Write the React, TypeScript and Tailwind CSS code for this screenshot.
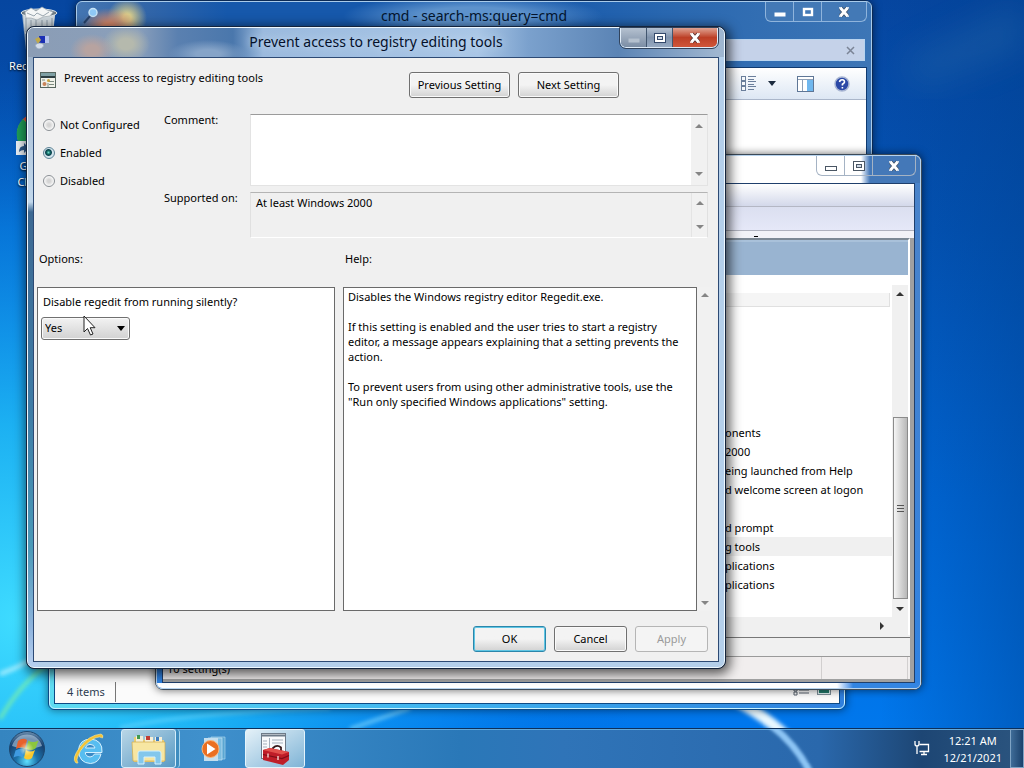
import React from "react";

const FONT = "font-['Noto_Sans','Open_Sans',sans-serif]";

function Wallpaper() {
  return (
    <svg className="absolute inset-0 h-full w-full" viewBox="0 0 1024 768" preserveAspectRatio="none" aria-hidden="true">
      <defs>
        <linearGradient id="sky" x1="0" y1="0" x2="0" y2="1">
          <stop offset="0" stopColor="#0646a0" />
          <stop offset="0.3" stopColor="#0353b4" />
          <stop offset="0.65" stopColor="#0068d8" />
          <stop offset="1" stopColor="#007af0" />
        </linearGradient>
        <radialGradient id="cyan" gradientUnits="userSpaceOnUse" cx="0" cy="0" r="1" gradientTransform="translate(20 620) scale(620 560)">
          <stop offset="0" stopColor="#3fdcff" />
          <stop offset="0.35" stopColor="#1fb9f6" stopOpacity="0.9" />
          <stop offset="0.7" stopColor="#0a8cf0" stopOpacity="0.6" />
          <stop offset="1" stopColor="#0068d8" stopOpacity="0" />
        </radialGradient>
        <linearGradient id="edge" x1="0" y1="0" x2="1" y2="0">
          <stop offset="0.86" stopColor="#003f90" stopOpacity="0" />
          <stop offset="1" stopColor="#00408f" stopOpacity="0.45" />
        </linearGradient>
        <filter id="soft"><feGaussianBlur stdDeviation="2" /></filter>
        <filter id="wide"><feGaussianBlur stdDeviation="16" /></filter>
      </defs>
      <rect width="1024" height="768" fill="url(#sky)" />
      <rect width="1024" height="768" fill="url(#cyan)" />
      <rect width="1024" height="768" fill="url(#edge)" />
      <path d="M900 60 L1024 0 V50 L920 90Z" fill="#2a6aa8" opacity="0.35" filter="url(#wide)" />
      <path d="M0 674 Q30 664 60 640" fill="none" stroke="#d8fbff" strokeWidth="4" opacity="0.7" filter="url(#soft)" />
      <path d="M0 719 Q20 684 48 664" fill="none" stroke="#7df0a8" strokeWidth="3" filter="url(#soft)" />
      <path d="M120 728 Q190 712 330 708" fill="none" stroke="#7fe0ff" strokeWidth="3" opacity="0.6" filter="url(#soft)" />
      <path d="M350 729 L410 708" fill="none" stroke="#9fe8ff" strokeWidth="3" opacity="0.7" filter="url(#soft)" />
      <path d="M735 700 Q785 726 818 772" fill="none" stroke="#e8f8ff" strokeWidth="11" filter="url(#soft)" />
    </svg>
  );
}

function RecycleBin() {
  return (
    <svg width="48" height="48" viewBox="0 0 48 48" aria-hidden="true">
      <path d="M8 10 L12 46 H36 L41 10Z" fill="#a9bccd" opacity="0.85" />
      <path d="M9 11 L41 11 L39 30 H11Z" fill="#cfd8de" />
      <path d="M12 14 V28 M17 16 V28 M22 16 V28 M28 16 V28 M33 16 V28 M38 14 V28" stroke="#8d9ca8" strokeWidth="1" />
      <ellipse cx="25" cy="9" rx="18" ry="4" fill="#6d7b85" stroke="#dfe8ee" />
      <path d="M11 8 l6 -4 5 3 6 -4 5 3 6 2 -3 4 -7 1 -6 3 -6 -2 -5 0Z" fill="#f4f6f6" stroke="#a3adb3" strokeWidth="0.7" />
      <path d="M13 9 l7 3 3 -3 6 3 6 -4" fill="none" stroke="#9aa7b0" />
    </svg>
  );
}

function Chrome() {
  return (
    <svg width="48" height="48" viewBox="0 0 48 48" aria-hidden="true">
      <circle cx="24" cy="24" r="21" fill="#f4c32c" />
      <path d="M24 24 L9 9 A21 21 0 0 1 42 13Z" fill="#dd4b3a" />
      <path d="M9 9 A21 21 0 0 0 24 45 L30 30Z" fill="#1f9d57" />
      <circle cx="24" cy="24" r="9" fill="#3f7fe8" stroke="#fff" strokeWidth="2" />
      <rect x="2" y="31" width="14" height="14" fill="#e8eef4" />
      <path d="M5 42 q0 -6 5 -6 v-3 l5 5 -5 5 v-3 q-3 0 -5 2Z" fill="#2c5a8c" />
    </svg>
  );
}

function DesktopIcons() {
  return (
    <div className="absolute left-0 top-0 flex w-[76px] flex-col gap-9 pt-1 text-center text-[11px] leading-4 text-white [text-shadow:0_1px_2px_#000]">
      <a href="#bin" className="flex flex-col items-center">
        <RecycleBin />
        <span className="whitespace-nowrap pt-1.5">Recycle Bin</span>
      </a>
      <a href="#chrome" className="flex flex-col items-center">
        <Chrome />
        <span>Google<br />Chrome</span>
      </a>
    </div>
  );
}

function Arrow({ dir, dark = false }: { dir: "up" | "down" | "right"; dark?: boolean }) {
  const d = dir === "up" ? "M0 5 L4 1 L8 5Z" : dir === "down" ? "M0 1 L8 1 L4 5Z" : "M2 -1 L6 3 L2 7Z";
  return (
    <svg width="8" height="6" viewBox="0 0 8 6" className="overflow-visible" aria-hidden="true">
      <path d={d} fill={dark ? "#333" : "#858585"} />
    </svg>
  );
}

function ScrollBar({ className = "" }: { className?: string }) {
  return (
    <div className={`flex w-4 shrink-0 flex-col items-center justify-between bg-[#f1f1f1] ${className}`}>
      <Arrow dir="up" />
      <Arrow dir="down" />
    </div>
  );
}

function MinGlyph({ line = "none", fill = "#fff" }: { line?: string; fill?: string }) {
  return (
    <svg width="14" height="12" viewBox="0 0 14 12" aria-hidden="true">
      <rect x="1.5" y="6.5" width="11" height="4" fill={fill} stroke={line} />
    </svg>
  );
}

function MaxGlyph({ restore = false, line = "#34496b" }: { restore?: boolean; line?: string }) {
  return (
    <svg width="14" height="12" viewBox="0 0 14 12" aria-hidden="true">
      {restore ? (
        <>
          <rect x="1.5" y="1.5" width="11" height="9" fill="#fff" stroke={line} />
          <rect x="4.5" y="4.5" width="5" height="3" fill="#cfd9e6" stroke={line} />
        </>
      ) : (
        <rect x="3" y="3" width="8" height="6" fill="none" stroke="#fff" strokeWidth="2.4" />
      )}
    </svg>
  );
}

function CloseGlyph({ line = "#44546a" }: { line?: string }) {
  return (
    <svg width="14" height="12" viewBox="0 0 14 12" aria-hidden="true">
      <path d="M3.5 2 L10.500 10 M10.500 2 L3.500 10" stroke={line} strokeWidth="4.400" />
      <path d="M3.5 2 L10.500 10 M10.500 2 L3.500 10" stroke="#fff" strokeWidth="2.800" />
      <path d="M2 1.800 h3 M9 1.800 h3 M2 10.200 h3 M9 10.200 h3" stroke="#fff" strokeWidth="1.200" />
    </svg>
  );
}

function SearchWindow() {
  return (
    <section className="absolute left-[75px] top-0 flex h-[560px] w-[798px] flex-col rounded-t-lg border border-[#0b2a55] shadow-[0_0_8px_rgba(0,0,0,0.5)]">
      <div className="flex grow flex-col rounded-t-md border border-[#a9cbea] bg-[radial-gradient(ellipse_28px_18px_at_32px_24px,#d2876b_20%,transparent),radial-gradient(ellipse_20px_20px_at_50px_16px,#d8cd8c_20%,transparent),radial-gradient(ellipse_130px_22px_at_396px_14px,#5d92cc_40%,transparent),linear-gradient(to_right,#4476b2_0,#3567a8_60px,#1658ab_150px,#1658ab_450px,#2a68b0_600px,#3d76b6_100%)] px-1">
        <header className="grid h-[37px] grid-cols-[1fr_auto_1fr] items-start">
          <svg width="18" height="18" viewBox="0 0 18 18" className="mt-1 ml-0.5" aria-hidden="true">
            <path d="M1 17 L7 10" stroke="#27436b" strokeWidth="2" />
            <circle cx="10" cy="6.500" r="4" fill="#8fc8f6" stroke="#c5e2f6" strokeWidth="1.5" />
          </svg>
          <h2 className="pt-1 text-[14px] leading-5 text-[#04152e]">cmd - search-ms:query=cmd</h2>
          <div className="flex h-5 justify-self-end rounded-b-md border border-t-0 border-[#8fb4dc] bg-[#4379b6]">
            <button aria-label="Minimize search" className="grid w-7 place-items-center border-r border-[#8fb4dc]"><MinGlyph /></button>
            <button aria-label="Maximize search" className="grid w-7 place-items-center border-r border-[#8fb4dc]"><MaxGlyph /></button>
            <button aria-label="Close search" className="grid w-11 place-items-center"><CloseGlyph /></button>
          </div>
        </header>
        <div className="mr-0.5 flex h-[22px] items-center justify-end border border-[#b9d4ef] bg-[#c5d2e9] pr-2">
          <button aria-label="Clear search" className="grid size-3 place-items-center">
            <svg width="9" height="9" viewBox="0 0 9 9"><path d="M1 1 L8 8 M8 1 L1 8" stroke="#7b8496" strokeWidth="1.5" /></svg>
          </button>
        </div>
        <div className="mt-1.5 flex grow flex-col border border-[#0f3a70] bg-white">
          <div className="flex h-8 items-center justify-end border-b border-[#aab6ca] bg-linear-to-b from-white to-[#dde7f4] pr-4">
            <button aria-label="Change view" className="flex items-center gap-3">
              <svg width="15" height="17" viewBox="0 0 15 17" aria-hidden="true">
                {[1, 6, 11].map((y) => (
                  <g key={y} stroke="#6b7f9c">
                    <rect x="0.5" y={y + 0.5} width="4" height="4" fill="#f6f9fc" />
                    <path d={`M7 ${y + 0.5} H15 M7 ${y + 3.5} H13`} />
                  </g>
                ))}
              </svg>
              <svg width="8" height="5" viewBox="0 0 8 5" aria-hidden="true"><path d="M0 0 H8 L4 5Z" fill="#1c2b3e" /></svg>
            </button>
            <button aria-label="Preview pane" className="ml-[21px]">
              <svg width="17" height="16" viewBox="0 0 17 16" aria-hidden="true">
                <rect x="0.5" y="0.5" width="16" height="15" fill="#fff" stroke="#5e7696" />
                <path d="M1 3.5 H16 M5.5 3 V15" stroke="#8fa0b6" />
                <rect x="10" y="4" width="6" height="11" fill="#6fb7ee" />
              </svg>
            </button>
            <button aria-label="Help" className="ml-5">
              <svg width="16" height="16" viewBox="0 0 16 16" aria-hidden="true">
                <circle cx="8" cy="8" r="7" fill="#2b48a6" stroke="#a9b6d3" strokeWidth="1.5" />
                <path d="M5.5 6 Q6 3.7 8.2 3.8 Q10.8 4 10.4 6.3 Q9.8 7.4 8.4 8.2 V9.5 M8.4 11 V12.5" fill="none" stroke="#fff" strokeWidth="1.6" />
              </svg>
            </button>
          </div>
        </div>
      </div>
    </section>
  );
}

function ItemsWindow() {
  return (
    <section className="absolute left-[48px] top-[400px] flex h-[310px] w-[798px] flex-col rounded-md border border-[#0d4a86] shadow-[0_0_8px_rgba(0,0,0,0.5)]">
      <div className="flex grow flex-col rounded-md border border-[#c8f2ff] bg-linear-to-r from-[#5fdcf2] via-[#3fb2ee] to-[#2f7fdd] px-1 pb-1">
        <div className="flex grow flex-col justify-end border border-[#0d4a86] bg-[#fbfbfb]">
          <footer className="flex h-[22px] items-center justify-between px-3 text-[11px] text-[#2d3c50]">
            <span className="flex h-5 items-center border-r border-[#777] pr-2.5">4 items</span>
            <svg width="40" height="10" viewBox="0 0 40 10" className="-mr-1.5" aria-hidden="true">
              <path d="M1 1 h3 v3 h-3z M1 5 h3 v3 h-3z M6 3 h10 M6 6 h10" fill="none" stroke="#56606c" />
              <rect x="24.500" y="0.5" width="13" height="7" fill="#dff0f0" stroke="#7d8f98" />
              <rect x="26" y="2" width="10" height="4" fill="#237a6b" />
            </svg>
          </footer>
        </div>
      </div>
    </section>
  );
}

const settings = [
  { name: "onents" },
  { name: "2000" },
  { name: "eing launched from Help" },
  { name: "d welcome screen at logon" },
  { name: "" },
  { name: "d prompt" },
  { name: "g tools", selected: true },
  { name: "plications" },
  { name: "plications" },
];

function PolicyWindow() {
  return (
    <section className="absolute left-[155px] top-[154px] flex h-[536px] w-[767px] flex-col rounded-lg border border-[#3c4a58] bg-white shadow-[0_0_9px_rgba(0,0,0,0.6)]">
      <div className="flex grow flex-col rounded-md border border-[#b7d3ee] bg-linear-to-b from-[#4b83c8] to-[#2f82e2]">
        <header className="flex h-[27px] items-start justify-end rounded-t-md bg-linear-to-r from-white from-[704px] to-[#4478b8] to-[713px] pr-1">
          <div className="flex h-5 rounded-b-md border border-t-0 border-[#a5b3c4]">
            <button aria-label="Minimize policy editor" className="grid w-7 place-items-center border-r border-[#a5b3c4]"><MinGlyph line="#4a5664" /></button>
            <button aria-label="Maximize policy editor" className="grid w-7 place-items-center border-r border-[#a5b3c4]"><MaxGlyph restore line="#4a5664" /></button>
            <button aria-label="Close policy editor" className="grid w-[42px] place-items-center"><CloseGlyph /></button>
          </div>
        </header>
        <div className="mr-[5px] ml-[5px] flex grow flex-col border border-[#1f3f6c] bg-[#a0a0a0]">
          <div className="h-[23px] border-b border-[#b4b7c4] bg-linear-to-b from-white to-[#d3d8ea]" />
          <div className="h-6 border-b border-[#aeb1bd] bg-linear-to-b from-[#dbdff0] to-[#e5e8f8]" />
          <div className="h-[7px] bg-[#f1f2f7] pl-[591px]"><div className="h-1.5 w-1 border-b border-black" /></div>
          <div className="mr-1 flex grow flex-col border-t-2 border-r-2 border-t-[#7b8894] border-r-white bg-white">
            <div className="h-[35px] shrink-0 border-t-2 border-[#a9c1da] bg-[#99b4d1]" />
            <div className="flex grow pt-2.5">
              <div className="flex grow flex-col">
                <div className="mt-2 mr-0.5 h-3.5 border-r border-b border-[#e0e0e0] bg-[#f5f5f5]" />
                <ul className="grow pt-[116px] text-[11px] text-black">
                  {settings.map((s, i) => (
                    <li key={i} className={`h-[19px] pl-[562px] leading-[19px] whitespace-nowrap ${s.selected ? "bg-[#f0f0f0]" : ""}`}>
                      {s.name}
                    </li>
                  ))}
                </ul>
              </div>
              <div className="flex w-4 flex-col items-center bg-[#f0f0f0] pb-1">
                <div className="flex h-[132px] pt-1.5"><Arrow dir="up" dark /></div>
                <div className="grid w-[15px] grow place-items-center border border-[#8b8b8b] bg-linear-to-r from-[#f5f5f5] to-[#b8b8b8]">
                  <svg width="7" height="9" viewBox="0 0 7 9" aria-hidden="true"><path d="M0 1.5 H7 M0 4.500 H7 M0 7.500 H7" stroke="#555" /></svg>
                </div>
                <div className="mt-1.5 flex h-2 items-center"><Arrow dir="down" dark /></div>
              </div>
            </div>
            <div className="flex h-[18px] shrink-0 items-center justify-end bg-[#f0f0f0] pr-[22px]"><Arrow dir="right" dark /></div>
          </div>
          <div className="mr-1 border-t-2 border-white border-t-[#f0f0f0]" />
          <div className="mr-1 h-[19px] border-t border-[#777] bg-[#f0f0f0]" />
          <footer className="mr-1 mb-[3px] flex h-[23px] items-center border-t border-[#9a9a9a] bg-[#f1eeee] text-[11px] text-black">
            <span className="grow pt-0.5 pl-1">10 setting(s)</span>
            <span className="mr-0.5 h-full w-[87px] border-x border-[#d2cfcf]" />
          </footer>
        </div>
        <div className="h-[5px] rounded-b-md bg-linear-to-r from-white from-[680px] to-[#3385e2] to-[696px]" />
      </div>
    </section>
  );
}

function PolicyIcon() {
  return (
    <svg width="16" height="16" viewBox="0 0 16 16" aria-hidden="true">
      <rect x="0.5" y="0.5" width="15" height="15" fill="#f1f2ea" stroke="#57665f" />
      <rect x="1" y="1" width="14" height="3" fill="#7fa0a4" />
      <path d="M1 5 H15" stroke="#2d3e42" strokeWidth="2" />
      <path d="M2 8 h3 M9 9.500 h5 M9 12.500 h5" stroke="#7c8a80" />
      <circle cx="8.500" cy="8.500" r="1.500" fill="#c9a23c" />
      <circle cx="4.500" cy="12" r="2" fill="#c8845a" />
      <path d="M8 11 v4" stroke="#7c8a80" />
    </svg>
  );
}

const btn = "h-[26px] rounded-[3px] border bg-linear-to-b from-[#f3f3f3] from-50% to-[#d2d2d2] to-100% text-center text-[11px] text-black";
const btnPlain = "border-[#707070] shadow-[inset_0_0_0_1px_#fafafa]";
const btnDefault = "border-[#2b86ab] shadow-[inset_0_0_0_1px_#5fc6e4]";

function PolicyDialog() {
  return (
    <section className="absolute left-[26px] top-[26px] flex h-[643px] w-[700px] flex-col rounded-lg border border-[#14243c] bg-[#14243c] shadow-[2px_3px_12px_2px_rgba(0,0,0,0.65)]">
      <div className="flex grow flex-col rounded-[7px] border border-[#eef8ff] bg-[linear-gradient(to_right,transparent_0_10px,#b4cfea_10px),linear-gradient(to_bottom,#8fa6c0_0,#a9bdd3_60px,#c2d8ec_174px,#3d6993_184px,#3f7ca5_380px,#4b9ab8_520px,#8fb4dd_600px,#b8d0f0_100%)]">
        <header className="grid h-[29px] grid-cols-[1fr_auto_1fr] items-start rounded-t-md bg-[radial-gradient(ellipse_22px_16px_at_64px_22px,#b7a3a0_30%,transparent),radial-gradient(ellipse_24px_18px_at_98px_16px,#b5b9ad_30%,transparent),radial-gradient(ellipse_40px_14px_at_180px_26px,#86a4c8_30%,transparent),linear-gradient(to_right,#8b9db5_0,#8a9fbb_110px,#5a80b0_150px,#4a77ac_205px,#9bbade_235px,#a9c6e6_450px,#7ba1cd_500px,#5b84b5_590px,#9fb6d0_690px)]">
          <svg width="16" height="16" viewBox="0 0 16 16" className="mt-1.5 ml-1.5" aria-hidden="true">
            <rect x="5" y="2" width="9" height="7" fill="#1b2fb4" />
            <path d="M11 2 h4 v7 h-4Z" fill="#b5c4ec" />
            <path d="M1 5 l4 -2 2 3 -3 4Z" fill="#c0a94a" />
            <path d="M1 11 q5 -4 9 0 q-1 4 -5 4 q-3 0 -4 -4Z" fill="#d4ddea" stroke="#8fa0b5" strokeWidth="0.7" />
          </svg>
          <h1 className="pt-[3px] text-[14px] leading-[22px] text-[#04102a] [text-shadow:0_0_8px_#d4e6fa]">Prevent access to registry editing tools</h1>
          <div className="mr-1.5 flex h-5 justify-self-end overflow-hidden rounded-b-md border border-t-0 border-[#e0ecf8] outline-1 outline-[#31435c]">
            <button disabled aria-label="Minimize" className="grid w-[26px] place-items-center border-r border-[#42566f] bg-linear-to-b from-[#b5c1d0] to-[#7c8ea5]"><MinGlyph fill="#b4c0ce" /></button>
            <button aria-label="Maximize" className="grid w-[26px] place-items-center border-r border-[#42566f] bg-linear-to-b from-[#b3c1d3] via-[#8093ac] to-[#97aac2]"><MaxGlyph restore /></button>
            <button aria-label="Close" className="grid w-[44px] place-items-center bg-linear-to-b from-[#dda292] via-[#bc3f26] to-[#d0563a]"><CloseGlyph line="#5b3434" /></button>
          </div>
        </header>
        <form className="mx-[5px] mb-[5px] flex grow flex-col border border-[#2d4a74] bg-[#f0f0f0] text-[11px] text-black" onSubmit={(e) => e.preventDefault()}>
          <div className="flex items-start pt-3.5 pl-1.5">
            <PolicyIcon />
            <p className="pl-2 leading-3">Prevent access to registry editing tools</p>
            <div className="mr-[99px] ml-auto flex gap-2">
              <button type="button" className={`w-[101px] ${btn} ${btnPlain}`}>Previous Setting</button>
              <button type="button" className={`w-[101px] ${btn} ${btnPlain}`}>Next Setting</button>
            </div>
          </div>
          <div className="mt-4 mr-2.5 flex">
            <fieldset className="flex w-[130px] shrink-0 flex-col gap-3 pt-[3px] pl-[9px]">
              {["Not Configured", "Enabled", "Disabled"].map((name) => (
                <label key={name} className="flex items-center gap-[5px] leading-4">
                  <input
                    type="radio"
                    name="state"
                    defaultChecked={name === "Enabled"}
                    className="size-3 appearance-none rounded-full border border-[#8a8f94] bg-[radial-gradient(circle,#d4d4d4_20%,#fafafa_70%)] checked:border-[#5c8295] checked:bg-[radial-gradient(circle_at_45%_45%,#6fd8c8_0,#0e6560_24%,#0c3f4c_38%,#d4e6ee_50%)]"
                  />
                  {name}
                </label>
              ))}
            </fieldset>
            <div className="flex grow flex-col gap-1.5">
              <div className="flex h-[72px]">
                <label htmlFor="comment" className="w-[86px] shrink-0 leading-3">Comment:</label>
                <div className="flex grow border border-[#e3e3e3] border-t-[#9b9b9b] bg-white">
                  <textarea id="comment" className="min-w-0 grow resize-none bg-white p-1 outline-none" />
                  <ScrollBar className="py-2" />
                </div>
              </div>
              <div className="flex h-[46px]">
                <label htmlFor="supported" className="w-[86px] shrink-0 leading-3">Supported on:</label>
                <div className="flex grow border border-[#e0e0e0] border-t-[#b4b4b4] border-b-white">
                  <textarea id="supported" readOnly defaultValue="At least Windows 2000" className="min-w-0 grow resize-none overflow-hidden px-[5px] pt-0.5 leading-4 outline-none" />
                  <ScrollBar className="border-l border-[#e4e4e4] py-[7px]" />
                </div>
              </div>
            </div>
          </div>
          <div className="mt-[11px] flex h-[38px] shrink-0 gap-2 pl-[5px] leading-5">
            <h2 className="w-[298px]">Options:</h2>
            <h2>Help:</h2>
          </div>
          <div className="flex grow gap-2 pr-[5px] pl-[3px]">
            <div className="flex w-[298px] flex-col items-start border border-[#6a6a6a] bg-white p-[3px]">
              <label htmlFor="silent" className="pt-px pl-0.5 leading-5">Disable regedit from running silently?</label>
              <div className="mt-[5px] grid w-[89px] items-center">
                <select id="silent" className="col-start-1 row-start-1 h-[23px] appearance-none rounded-[3px] border border-[#707070] bg-linear-to-b from-[#f2f2f2] to-[#d2d2d2] px-[3px] shadow-[inset_0_0_0_1px_#fafafa]">
                  <option>Yes</option>
                  <option>No</option>
                </select>
                <svg width="8" height="5" viewBox="0 0 8 5" className="pointer-events-none col-start-1 row-start-1 mr-[5px] justify-self-end" aria-hidden="true"><path d="M0 0 H8 L4 5Z" fill="#000" /></svg>
              </div>
            </div>
            <div className="flex grow">
              <div className="flex w-0 grow flex-col gap-[15px] border border-[#6a6a6a] bg-white py-px pr-2 pl-1 leading-[15px]">
                <p>Disables the Windows registry editor Regedit.exe.</p>
                <p>If this setting is enabled and the user tries to start a registry editor, a message appears explaining that a setting prevents the action.</p>
                <p>To prevent users from using other administrative tools, use the "Run only specified Windows applications" setting.</p>
              </div>
              <ScrollBar className="py-[5px]" />
            </div>
          </div>
          <div className="flex justify-end gap-2 pt-[15px] pr-[10px] pb-[9px]">
            <button type="submit" className={`w-[73px] ${btn} ${btnDefault}`}>OK</button>
            <button type="button" className={`w-[73px] ${btn} ${btnPlain}`}>Cancel</button>
            <button type="button" disabled className="h-[26px] w-[73px] rounded-[3px] border border-[#b5b5b5] bg-[#f4f4f4] text-[#9a9a9a]">Apply</button>
          </div>
        </form>
      </div>
    </section>
  );
}

function StartOrb() {
  return (
    <svg width="38" height="38" viewBox="0 0 38 38" aria-hidden="true">
      <defs>
        <radialGradient id="orb" cx="0.5" cy="0.85" r="0.85">
          <stop offset="0" stopColor="#5fe0ff" />
          <stop offset="0.35" stopColor="#1d74ac" />
          <stop offset="0.75" stopColor="#173f6e" />
          <stop offset="1" stopColor="#7295b5" />
        </radialGradient>
        <radialGradient id="halo">
          <stop offset="0" stopColor="#fff6c0" stopOpacity="0.8" />
          <stop offset="1" stopColor="#fff6c0" stopOpacity="0" />
        </radialGradient>
      </defs>
      <circle cx="19" cy="19" r="17.500" fill="url(#orb)" stroke="#1c466e" />
      <path d="M4 16 A15.500 15.500 0 0 1 34 16 Q19 22 4 16Z" fill="#d4e6f4" opacity="0.5" />
      <path d="M10 11 q5 -4 9 -1 l-2 8 q-4 -2 -9 1Z" fill="#e8602c" />
      <path d="M20.500 10.500 q4 3 10 0 l-3 8 q-5 3 -9 0Z" fill="#8cc63e" />
      <path d="M7.500 20.500 q5 -3 9 -1 l-2 8 q-4 -3 -9 0Z" fill="#3f9ae0" />
      <path d="M18 20 q4 3 9 0 l-3 8 q-4 3 -8 0Z" fill="#fbc92e" />
      <circle cx="18.500" cy="19" r="7" fill="url(#halo)" />
    </svg>
  );
}

function Explorer() {
  return (
    <svg width="32" height="32" viewBox="0 0 32 32" aria-hidden="true">
      <path d="M28 21 H21.500 Q20 24 17 24 Q12.500 23.500 12.300 19.500 H29 Q30 7 17.500 6 Q6 6.500 5.500 17.500 Q6 30 17.500 30.500 Q26 30 28 21Z M12.500 15 Q13 11.500 17 11.300 Q21.500 11.500 22 15Z" fill="#57bdf0" fillRule="evenodd" stroke="#d5f1ff" strokeWidth="1" />
      <path d="M3 30 Q-2 26 7 14 Q16 2 28 1 Q31 2 29.500 5 Q27 3 22 5 Q9 12 5 23 Q3 27 5 30Z" fill="#f4c335" stroke="#fae79a" strokeWidth="0.600" />
    </svg>
  );
}

function Folder() {
  return (
    <svg width="36" height="32" viewBox="0 0 36 32" aria-hidden="true">
      <path d="M3 4 H11 L13 7 H33 V29 H3Z" fill="#e8cd76" />
      <path d="M5 3 h7 v6 h-7z" fill="#f3efd9" /><path d="M6 2 h3 v4 h-3z" fill="#3f9a50" />
      <path d="M14 4 h8 v6 h-8z" fill="#f6f0d8" /><path d="M15 3 h4 v4 h-4z" fill="#c23c34" />
      <path d="M24 4 h7 v6 h-7z" fill="#f6f0d8" /><path d="M25 4 h3 v4 h-3z" fill="#3f7fc0" />
      <path d="M1 9 H34 V28 H2Z" fill="#f7e6a2" stroke="#d0aa4b" strokeWidth="0.700" />
      <path d="M7 31 V20 Q7 18 9 18 H28 Q30 18 30 20 V31 H24 V24 H13 V31Z" fill="#83c7ec" stroke="#d3f1ff" />
    </svg>
  );
}

function Player() {
  return (
    <svg width="27" height="26" viewBox="0 0 27 26" aria-hidden="true">
      <path d="M11 1 H25 V23 H11Z" fill="#5ba6d2" stroke="#a8d4ee" strokeWidth="0.700" />
      <path d="M8 2 H22 V24 H8Z" fill="#7dbde0" stroke="#c4e4f6" strokeWidth="0.700" />
      <path d="M4 2 H18 V25 H4Z" fill="#c4deee" />
      <circle cx="10.500" cy="13" r="8.500" fill="#ea6f22" stroke="#f9b57b" />
      <path d="M7 7.500 L15.500 13 L7 18.500Z" fill="#fff" />
    </svg>
  );
}

function Toolbox() {
  return (
    <svg width="30" height="34" viewBox="0 0 30 34" aria-hidden="true">
      <rect x="1.500" y="1.500" width="24" height="25" fill="#f8fafc" stroke="#6d7a88" />
      <path d="M2 3.500 H25" stroke="#6d7a88" strokeWidth="2" />
      <path d="M9.500 6 V26 M3 9 h4 M3 12 h4 M3 15 h4 M12 8 h11 M12 11 h11" stroke="#a3afbb" />
      <path d="M13 18 V16 Q17 12 21 15.500 V19" fill="none" stroke="#35191a" strokeWidth="1.800" />
      <path d="M3 18 L10 16 L29 20 V28 L23 33 L3 28Z" fill="#bf1d28" />
      <path d="M3 18 L10 16 L29 20 L22 22.500Z" fill="#e2504c" />
      <path d="M3 22.500 L22 26.500 L29 23.500" fill="none" stroke="#7c0e18" strokeWidth="1.200" />
      <path d="M8 21.500 v4 M18 24 v4" stroke="#f1c4c0" strokeWidth="1.500" />
    </svg>
  );
}

function Taskbar() {
  return (
    <nav className="relative flex h-10 shrink-0 items-stretch border-t border-[#0c2f5a] bg-[linear-gradient(to_right,#3585c0_0,#3f90cc_20%,#2a78b8_45%,#2f74b8_55%,#2a68ac_80%,#1d4674_90%,#2c557f_100%)] shadow-[inset_0_1px_0_#62a9dc]">
      <svg className="pointer-events-none absolute right-[170px] top-0 h-full w-[110px]" viewBox="0 0 110 40" aria-hidden="true">
        <defs><filter id="beam"><feGaussianBlur stdDeviation="1.5" /></filter></defs>
        <path d="M26 -4 Q52 16 66 44" fill="none" stroke="#8cc4f4" strokeWidth="7" filter="url(#beam)" />
      </svg>
      <button aria-label="Start" className="grid w-[54px] place-items-center"><StartOrb /></button>
      <button aria-label="Internet Explorer" className="ml-2.5 grid w-[50px] place-items-center"><Explorer /></button>
      <div className="ml-[7px] flex">
        <button aria-label="File Explorer" className="grid w-[55px] place-items-center rounded-[3px] border border-[#d5edfa] bg-linear-to-br from-[#b9d6e6] to-[#579ac4]"><Folder /></button>
        <span className="w-1 rounded-r-sm border-r border-[#a5d4ee] bg-[#3f8dbf]" />
      </div>
      <button aria-label="Media Player" className="ml-1 grid w-[58px] place-items-center"><Player /></button>
      <button aria-label="Policy Editor" className="ml-[3px] grid w-[60px] place-items-center rounded-[3px] border border-[#e4f4fc] bg-linear-to-br from-[#e4f1f8] to-[#7fb4d6]"><Toolbox /></button>
      <div className="ml-auto flex items-center text-[11px] leading-[17px] text-white">
        <svg width="16" height="16" viewBox="0 0 16 16" className="mr-[13px]" aria-hidden="true">
          <path d="M5.500 3.500 H14.500 V10.500 H5.500 M10 11 V13.500 M7 13.500 H13" fill="none" stroke="#fff" strokeWidth="1.300" />
          <path d="M1 0 V3 Q1 5 3 5 Q5 5 5 3 V0 M3 5 V13" fill="none" stroke="#fff" strokeWidth="1.300" />
        </svg>
        <time className="text-center">12:21 AM<br />12/21/2021</time>
        <button aria-label="Show desktop" className="ml-2 h-full w-3.5 border border-[#7fa3c4] bg-linear-to-r from-[#3f6c98] to-[#1b416c]" />
      </div>
    </nav>
  );
}

export default function App() {
  return (
    <div className={`relative flex min-h-screen w-full flex-col overflow-hidden bg-[#0560c4] ${FONT}`}>
      <Wallpaper />
      <main className="relative grow">
        <DesktopIcons />
        <ItemsWindow />
        <SearchWindow />
        <PolicyWindow />
        <PolicyDialog />
        <svg width="14" height="22" viewBox="0 0 14 22" className="pointer-events-none absolute left-[83px] top-[315px]" aria-hidden="true">
          <path d="M1 1 V17 L4.500 13.500 L7.500 20 L10 19 L7.200 12.700 H12Z" fill="#fff" stroke="#222" />
        </svg>
      </main>
      <Taskbar />
    </div>
  );
}
